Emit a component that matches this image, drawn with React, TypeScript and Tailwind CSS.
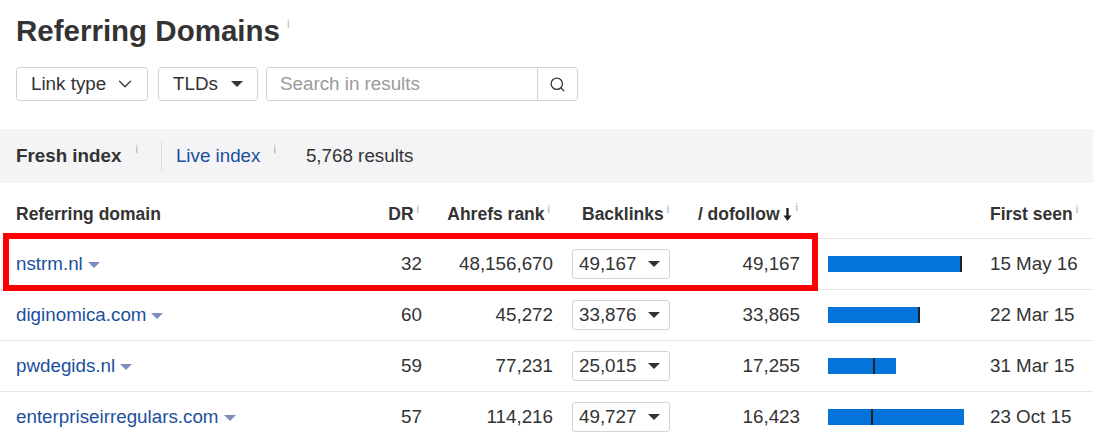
import { ChevronDown, Search } from "lucide-react";

const ROWS = [
  { domain: "nstrm.nl", dr: 32, rank: "48,156,670", backlinks: 49167, dofollow: 49167, seen: "15 May 16" },
  { domain: "diginomica.com", dr: 60, rank: "45,272", backlinks: 33876, dofollow: 33865, seen: "22 Mar 15" },
  { domain: "pwdegids.nl", dr: 59, rank: "77,231", backlinks: 25015, dofollow: 17255, seen: "31 Mar 15" },
  { domain: "enterpriseirregulars.com", dr: 57, rank: "114,216", backlinks: 49727, dofollow: 16423, seen: "23 Oct 15" },
];

const SCALE = 134 / 49167;
const fmt = (n: number) => n.toLocaleString("en-US");

function Info({ className = "" }: { className?: string }) {
  return <span className={`text-[11px] font-normal text-[#aaa] leading-none relative -top-[7px] ml-[3px] ${className}`}>i</span>;
}

function Caret({ className = "" }: { className?: string }) {
  return (
    <svg width="12" height="6" viewBox="0 0 12 6" className={className}>
      <path d="M0 0h12L6 6z" fill="currentColor" />
    </svg>
  );
}

export default function App() {
  return (
    <div className="w-[1107px] h-[437px] overflow-hidden bg-white font-['Liberation_Sans',Arial,sans-serif] text-[#333]">
      <div className="w-[1093px]">
        {/* Title */}
        <div className="px-4 pt-[13px] flex items-start">
          <h1 className="text-[29.5px] leading-[36px] font-bold text-[#333]">Referring Domains</h1>
          <span className="text-[12px] text-[#bbb] ml-[7px] mt-[2px]">i</span>
        </div>

        {/* Filters */}
        <div className="px-4 mt-[18px] flex h-[34px] text-[18.8px]">
          <button className="w-[132px] h-full border border-[#d4d4d4] rounded-[3px] flex items-center pl-[14px] gap-[8px] text-[#333]">
            Link type
            <ChevronDown size={22} strokeWidth={1.3} />
          </button>
          <button className="ml-[10px] w-[100px] h-full border border-[#d4d4d4] rounded-[3px] flex items-center pl-[14px] gap-[13px] text-[#333]">
            TLDs
            <Caret className="text-[#333]" />
          </button>
          <div className="ml-[8px] w-[312px] h-full border border-[#d4d4d4] rounded-[3px] flex items-center">
            <span className="flex-1 pl-[13px] text-[#9a9a9a]">Search in results</span>
            <div className="w-[40px] h-full border-l border-[#d4d4d4] flex items-center justify-center">
              <Search size={17} strokeWidth={1.8} className="text-[#333]" />
            </div>
          </div>
        </div>

        {/* Index bar */}
        <div className="mt-[28px] h-[54px] bg-[#f4f4f6] flex items-center pl-4 text-[18.8px]">
          <span className="font-bold">Fresh index</span>
          <Info className="ml-[14px]" />
          <div className="w-px h-[29px] bg-[#dcdcdc] ml-[23px] mr-[14px]" />
          <span className="text-[#1b4f9e]">Live index</span>
          <Info className="ml-[13px]" />
          <span className="ml-[30px]">5,768 results</span>
        </div>

        {/* Table header */}
        <div className="h-[56px] border-b border-[#e6e6e6] flex items-center pt-[7px] text-[17.5px] font-bold">
          <div className="w-[382px] pl-4">Referring domain</div>
          <div className="w-[40px] text-right pr-[3px] whitespace-nowrap">DR<Info className="absolute" /></div>
          <div className="w-[131px] text-right pr-[3px] whitespace-nowrap">Ahrefs rank<Info className="absolute" /></div>
          <div className="w-[127px] pl-[29px] whitespace-nowrap">Backlinks<Info /></div>
          <div className="w-[120px] flex items-center justify-end whitespace-nowrap pr-[3px]">
            / dofollow
            <svg width="9" height="13" viewBox="0 0 9 13" className="ml-[3px]">
              <path d="M4.5 0v9" stroke="#222" strokeWidth="2.4" />
              <path d="M0.5 7.5h8L4.5 13z" fill="#222" />
            </svg>
            <Info className="absolute translate-x-[1px]" />
          </div>
          <div className="w-[190px]" />
          <div className="flex-1 whitespace-nowrap">First seen<Info /></div>
        </div>

        {/* Rows */}
        {ROWS.map((r, i) => (
          <div key={r.domain} className="relative h-[51px] border-b border-[#e6e6e6] flex items-center text-[18.8px]">
            {i === 0 && (
              <div className="absolute -top-[6px] left-[3px] w-[815px] h-[58px] border-[6px] border-[#ff0000] pointer-events-none" />
            )}
            <div className="w-[382px] pl-4 flex items-center">
              <span className="text-[#1b4f9e]">{r.domain}</span>
              <Caret className="ml-[5px] mt-[2px] text-[#7d8dc0]" />
            </div>
            <div className="w-[40px] text-right">{r.dr}</div>
            <div className="w-[131px] text-right">{r.rank}</div>
            <div className="w-[127px] pl-[19px]">
              <div className="w-[98px] h-[30px] border border-[#d4d4d4] rounded-[3px] flex items-center pl-[6px] gap-[12px]">
                {fmt(r.backlinks)}
                <Caret className="text-[#333]" />
              </div>
            </div>
            <div className="w-[120px] text-right">{fmt(r.dofollow)}</div>
            <div className="w-[190px] pl-[28px]">
              <div className="relative h-[16px] bg-[#0474da]" style={{ width: r.backlinks * SCALE }}>
                <div className="absolute top-0 h-full w-[2px] bg-[#222]" style={{ left: r.dofollow * SCALE - 2 }} />
              </div>
            </div>
            <div className="flex-1">{r.seen}</div>
          </div>
        ))}
      </div>
    </div>
  );
}
